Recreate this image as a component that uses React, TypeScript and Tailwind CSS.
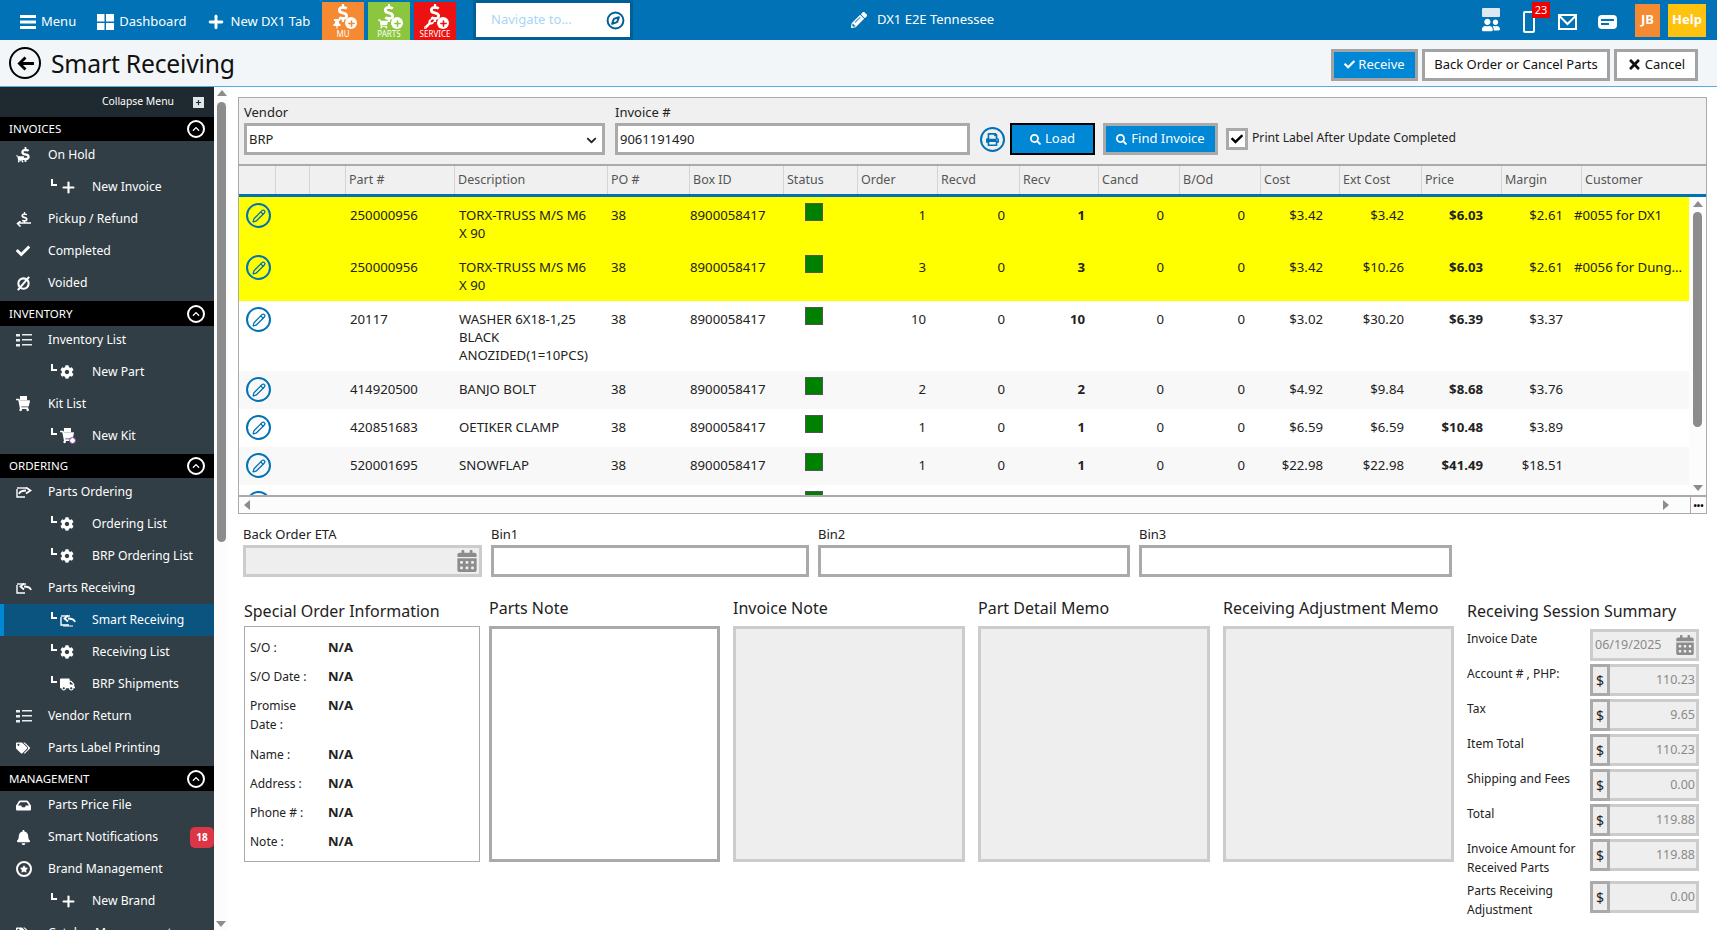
import { ReactNode } from 'react';
import { Compass, Pencil, Plus } from 'lucide-react';
import {
  FaBell, FaCalendarAlt, FaCheck, FaChevronDown, FaChevronUp, FaCog, FaDollarSign, FaInbox,
  FaPencilAlt, FaPrint, FaSearch, FaShoppingCart, FaStar, FaTags, FaTimes, FaTruck,
  FaUserFriends, FaWrench, FaThumbtack,
} from 'react-icons/fa';

const COLS =
  'grid grid-cols-[36px_34px_36px_109px_153px_82px_94px_74px_80px_82px_79px_81px_81px_79px_82px_80px_80px_minmax(0,1fr)]';

function Tile({ color, label, icon, accent }: { color: string; label: string; icon: ReactNode; accent: string }) {
  return (
    <div className={`w-[42px] h-[38px] mt-[2px] flex flex-col items-center text-white ${color}`}>
      <div className="relative h-[27px] w-[32px]">
        <FaDollarSign className="absolute left-[7px] top-[2px] text-[18px]" />
        <div className="absolute left-[5px] top-[17px] text-[10px]">{icon}</div>
        <div className="absolute right-[2px] top-[15px] w-[12px] h-[12px] rounded-full bg-white flex items-center justify-center">
          <Plus className={`w-[9px] h-[9px] ${accent}`} strokeWidth={4} />
        </div>
      </div>
      <span className="text-[8px] leading-[10px]">{label}</span>
    </div>
  );
}

function Calendar({ size = 'text-[22px]' }: { size?: string }) {
  return <FaCalendarAlt className={`${size} text-[#8c8c8c]`} />;
}

function ListIcon() {
  return (
    <svg viewBox="0 0 16 14" className="w-[16px] h-[14px]" fill="#e8edf0">
      <rect x="0" y="1" width="4" height="2.5" />
      <rect x="0" y="6" width="4" height="2.5" />
      <rect x="0" y="11" width="4" height="2.5" />
      <rect x="6" y="1" width="10" height="1.5" />
      <rect x="6" y="6" width="10" height="1.5" />
      <rect x="6" y="11" width="10" height="1.5" />
    </svg>
  );
}

function VoidIcon() {
  return (
    <svg viewBox="0 0 16 16" className="w-[15px] h-[15px]" fill="none" stroke="white" strokeWidth="2.2">
      <circle cx="8" cy="8" r="5.5" />
      <path d="M14 1 2 15" />
    </svg>
  );
}

function OnHoldIcon() {
  return (
    <div className="relative w-[17px] h-[16px] text-white">
      <FaDollarSign className="absolute right-0 top-0 text-[15px]" />
      <FaShoppingCart className="absolute left-0 bottom-0 text-[8px]" />
    </div>
  );
}

function PickupIcon() {
  return (
    <div className="relative w-[15px] h-[15px] text-white">
      <FaDollarSign className="absolute left-[3px] top-0 text-[11px]" />
      <svg viewBox="0 0 15 6" className="absolute left-0 bottom-0 w-[15px] h-[6px]" fill="none" stroke="white" strokeWidth="1.5">
        <path d="M15 2H2M4.5 0 1.5 2.5 4.5 5.5" />
      </svg>
    </div>
  );
}

function KitIcon({ plus }: { plus?: boolean }) {
  return (
    <div className="relative w-[16px] h-[16px] text-white">
      <FaShoppingCart className="absolute left-0 bottom-0 text-[14px]" />
      <div className="absolute left-[4px] top-0 w-[7px] h-[4px] bg-white" />
      {plus && <div className="absolute right-0 bottom-0 w-[7px] h-[7px] rounded-full bg-white border border-[#7b3fa0]" />}
    </div>
  );
}

function TransferIcon({ back, small }: { back?: boolean; small?: boolean }) {
  return (
    <svg viewBox="0 0 16 14" className="w-[16px] h-[14px]" fill="none" stroke="white">
      <path d="M1 4v8h8" strokeWidth="1.4" />
      <path d="M1 3h9" strokeWidth="1.4" />
      {back ? (
        <path d="M15 9C14 6 11 5.5 8 5.5M8 2.5 4.5 5.5 8 8.5" strokeWidth="1.8" />
      ) : (
        <path d="M3 9C4 6 7 5.5 10 5.5M10 2.5 14.5 5.5 10 8.5" strokeWidth="1.8" />
      )}
      {small && <path d="M3 13h10" strokeWidth="1" />}
    </svg>
  );
}

function BrandIcon() {
  return (
    <div className="w-[16px] h-[16px] rounded-full border-2 border-white flex items-center justify-center">
      <FaStar className="text-[8px] text-white" />
    </div>
  );
}

function WindowsIcon() {
  return (
    <svg viewBox="0 0 17 16" className="w-[17px] h-[16px]" fill="white">
      <rect x="0" y="0" width="7.5" height="7.5" />
      <rect x="9" y="0" width="8" height="7.5" />
      <rect x="0" y="9" width="7.5" height="7" />
      <rect x="9" y="9" width="8" height="7" />
    </svg>
  );
}

function Hamburger() {
  return (
    <svg viewBox="0 0 16 14" className="w-[16px] h-[14px]" fill="white">
      <rect width="16" height="3" y="0" />
      <rect width="16" height="3" y="5.5" />
      <rect width="16" height="3" y="11" />
    </svg>
  );
}

function TopLink({ icon, label }: { icon: ReactNode; label: string }) {
  return (
    <div className="flex items-center gap-[5px] text-[13px] text-white pt-[3px]">
      {icon}
      <span>{label}</span>
    </div>
  );
}

function TopBar() {
  return (
    <div className="h-10 shrink-0 bg-[#0072b5] flex items-stretch text-white">
      <div className="flex items-center gap-[21px] pl-5 w-[322px]">
        <TopLink icon={<Hamburger />} label="Menu" />
        <TopLink icon={<WindowsIcon />} label="Dashboard" />
        <div className="-ml-[2px]">
          <TopLink icon={<Plus className="w-[20px] h-[20px]" strokeWidth={3.5} />} label="New DX1 Tab" />
        </div>
      </div>
      <div className="flex gap-[4px]">
        <Tile color="bg-[#f58a32]" label="MU" icon={<FaThumbtack />} accent="text-[#f58a32]" />
        <Tile color="bg-[#8cc63f]" label="PARTS" icon={<FaShoppingCart />} accent="text-[#8cc63f]" />
        <Tile color="bg-[#ed1111]" label="SERVICE" icon={<FaWrench />} accent="text-[#ed1111]" />
      </div>
      <div className="ml-[17px] w-[160px] h-10 border-[3px] border-[#005f96] bg-white flex items-center pl-[15px] pr-[5px] justify-between">
        <span className="text-[13px] text-[#a9d6f5]">Navigate to...</span>
        <Compass className="w-[19px] h-[19px] text-[#005f96]" strokeWidth={2.5} />
      </div>
      <div className="ml-[218px] flex items-center gap-[10px] text-[13px]">
        <FaPencilAlt className="text-[16px]" />
        <span>DX1 E2E Tennessee</span>
      </div>
      <div className="flex-1" />
      <div className="flex items-center gap-[21px] pr-[11px]">
        <div className="flex flex-col items-center w-[19px] mr-[3px] mt-[2px]">
          <div className="w-[18px] h-[9px] bg-[#dce9f2] rounded-[1px]" />
          <FaUserFriends className="text-[18px] -mt-[1px]" />
        </div>
        <div className="relative mx-[2px] -ml-[1px] w-[12px] h-[22px] border-2 border-white rounded-[2px] mt-[4px]">
          <span className="absolute left-[7px] -top-[11px] w-[18px] h-[16px] bg-[#f00000] text-[11px] leading-[16px] text-center">
            23
          </span>
        </div>
        <svg viewBox="0 0 19 16" className="w-[19px] h-[16px] mt-[4px]" fill="none" stroke="white" strokeWidth="2">
          <rect x="1" y="1" width="17" height="14" />
          <path d="M1 1.5 9.5 10 18 1.5" />
        </svg>
        <div className="w-[19px] h-[14px] bg-white rounded-[4px] flex flex-col justify-center gap-[2px] px-[3px] mt-[4px]">
          <div className="h-[2px] w-full bg-[#0072b5]" />
          <div className="h-[2px] w-[8px] bg-[#0072b5]" />
        </div>
        <div className="flex gap-[8px] -ml-[3px]">
          <div className="w-[25px] h-[33px] bg-[#f58a32] flex items-center justify-center text-[13px] font-bold">JB</div>
          <div className="w-[38px] h-[33px] bg-[#ffc20e] flex items-center justify-center text-[13px] font-bold">Help</div>
        </div>
      </div>
    </div>
  );
}

function ActionButton({ children, primary, width }: { children: ReactNode; primary?: boolean; width: string }) {
  return (
    <button
      className={`${width} h-[32px] border-[3px] border-[#a3a3a3] flex items-center justify-center gap-[3px] text-[13px] ${
        primary ? 'bg-[#0087d6] text-white' : 'bg-white text-[#111]'
      }`}
    >
      {children}
    </button>
  );
}

function SubHeader() {
  return (
    <div className="h-[47px] shrink-0 bg-[#f2f6f9] border-b border-[#5aaae2] flex items-center pl-[9px] pr-[19px]">
      <div className="w-[32px] h-[32px] rounded-full border-[2.5px] border-black flex items-center justify-center">
        <svg viewBox="0 0 18 16" className="w-[17px] h-[15px]" fill="none" stroke="black" strokeWidth="3">
          <path d="M9 1.5 2.5 8 9 14.5M3 8h15" />
        </svg>
      </div>
      <h1 className="ml-[10px] mt-[2px] text-[24.7px] text-[#111] tracking-[-0.2px]">Smart Receiving</h1>
      <div className="flex-1" />
      <div className="flex gap-[4px] mt-[3px]">
        <ActionButton primary width="w-[87px]">
          <FaCheck className="text-[11px]" /> Receive
        </ActionButton>
        <ActionButton width="w-[188px]">Back Order or Cancel Parts</ActionButton>
        <ActionButton width="w-[84px]">
          <FaTimes className="text-[15px]" /> Cancel
        </ActionButton>
      </div>
    </div>
  );
}

type NavItem = { label: string; icon: ReactNode; child?: boolean; active?: boolean; badge?: string };

const gear = <FaCog className="text-[14px] text-white" />;

const NAV: { title: string; headerCls: string; items: NavItem[] }[] = [
  {
    title: 'INVOICES',
    headerCls: 'h-[24px]',
    items: [
      { label: 'On Hold', icon: <OnHoldIcon /> },
      { label: 'New Invoice', child: true, icon: <Plus className="w-[17px] h-[17px] text-white" strokeWidth={3} /> },
      { label: 'Pickup / Refund', icon: <PickupIcon /> },
      { label: 'Completed', icon: <FaCheck className="text-[14px] text-white" /> },
      { label: 'Voided', icon: <VoidIcon /> },
    ],
  },
  {
    title: 'INVENTORY',
    headerCls: 'h-[25px]',
    items: [
      { label: 'Inventory List', icon: <ListIcon /> },
      { label: 'New Part', child: true, icon: gear },
      { label: 'Kit List', icon: <KitIcon /> },
      { label: 'New Kit', child: true, icon: <KitIcon plus /> },
    ],
  },
  {
    title: 'ORDERING',
    headerCls: 'h-[24px]',
    items: [
      { label: 'Parts Ordering', icon: <TransferIcon /> },
      { label: 'Ordering List', child: true, icon: gear },
      { label: 'BRP Ordering List', child: true, icon: gear },
      { label: 'Parts Receiving', icon: <TransferIcon back /> },
      { label: 'Smart Receiving', child: true, active: true, icon: <TransferIcon back small /> },
      { label: 'Receiving List', child: true, icon: gear },
      { label: 'BRP Shipments', child: true, icon: <FaTruck className="text-[15px] text-white" /> },
      { label: 'Vendor Return', icon: <ListIcon /> },
      { label: 'Parts Label Printing', icon: <FaTags className="text-[14px] text-white" /> },
    ],
  },
  {
    title: 'MANAGEMENT',
    headerCls: 'h-[25px]',
    items: [
      { label: 'Parts Price File', icon: <FaInbox className="text-[15px] text-white" /> },
      { label: 'Smart Notifications', badge: '18', icon: <FaBell className="text-[15px] text-white" /> },
      { label: 'Brand Management', icon: <BrandIcon /> },
      { label: 'New Brand', child: true, icon: <Plus className="w-[17px] h-[17px] text-white" strokeWidth={3} /> },
      { label: 'Catalog Management', icon: <FaTags className="text-[14px] text-white" /> },
    ],
  },
];

function NavRow({ item }: { item: NavItem }) {
  return (
    <div
      className={`h-[32px] shrink-0 flex items-center text-[12.2px] text-white first:-mt-[2px] ${
        item.active ? 'bg-[#0b5480] border-l-4 border-[#0087d6] pl-[47px]' : item.child ? 'pl-[51px]' : 'pl-[16px]'
      }`}
    >
      {item.child && (
        <div className="w-[6px] h-[7px] border-l-2 border-b-2 border-white mb-[10px] mr-[3px] shrink-0" />
      )}
      <div className="w-[32px] flex items-center shrink-0">{item.icon}</div>
      <span className="whitespace-nowrap">{item.label}</span>
      {item.badge && (
        <span className="ml-auto w-[24px] h-[21px] rounded-[5px] bg-[#dc3545] text-[10px] font-bold flex items-center justify-center">
          {item.badge}
        </span>
      )}
    </div>
  );
}

function Sidebar() {
  return (
    <div className="w-[214px] shrink-0 bg-[#323e45] flex flex-col overflow-hidden">
      <div className="h-[30px] shrink-0 bg-[#1f2a30] flex items-center justify-end pr-[10px] gap-[19px] text-[10.4px] text-white">
        <span>Collapse Menu</span>
        <div className="w-[11px] h-[11px] bg-[#dfe6ea] flex items-center justify-center">
          <Plus className="w-[7px] h-[7px] text-[#1f2a30]" strokeWidth={4} />
        </div>
      </div>
      {NAV.map((section) => (
        <div key={section.title} className="flex flex-col shrink-0 pb-[2px] last:pb-0">
          <div className={`${section.headerCls} shrink-0 bg-black flex items-center justify-between pl-[9px] pr-[9px] text-[11.5px] text-white`}>
            <span>{section.title}</span>
            <div className="w-[18px] h-[18px] rounded-full border-2 border-white flex items-center justify-center">
              <FaChevronUp className="text-[8px]" />
            </div>
          </div>
          <div className="flex flex-col">
            {section.items.map((item) => (
              <NavRow key={item.label} item={item} />
            ))}
          </div>
        </div>
      ))}
    </div>
  );
}

function SideScroll() {
  return (
    <div className="w-[14px] shrink-0 bg-[#fcfcfc] flex flex-col items-center justify-between py-[3px]">
      <div className="flex flex-col items-center gap-[6px] ml-[1px]">
        <div className="w-0 h-0 border-x-[5px] border-x-transparent border-b-[6px] border-b-[#8c8c8c]" />
        <div className="w-[9px] h-[440px] rounded-full bg-[#8c8c8c]" />
      </div>
      <div className="w-0 h-0 border-x-[5px] border-x-transparent border-t-[6px] border-t-[#8c8c8c]" />
    </div>
  );
}

const HEADERS = ['', '', '', 'Part #', 'Description', 'PO #', 'Box ID', 'Status', 'Order', 'Recvd', 'Recv', 'Cancd', 'B/Od', 'Cost', 'Ext Cost', 'Price', 'Margin', 'Customer'];

type Row = {
  part: string; desc: string; order: string; recv: string; cost: string; ext: string; price: string; margin: string;
  customer?: string; bg: string; h: string;
};

const ROWS: Row[] = [
  { part: '250000956', desc: 'TORX-TRUSS M/S M6 X 90', order: '1', recv: '1', cost: '$3.42', ext: '$3.42', price: '$6.03', margin: '$2.61', customer: '#0055 for DX1', bg: 'bg-[#ffff00]', h: 'h-[52px]' },
  { part: '250000956', desc: 'TORX-TRUSS M/S M6 X 90', order: '3', recv: '3', cost: '$3.42', ext: '$10.26', price: '$6.03', margin: '$2.61', customer: '#0056 for Dung...', bg: 'bg-[#ffff00]', h: 'h-[52px]' },
  { part: '20117', desc: 'WASHER 6X18-1,25 BLACK ANOZIDED(1=10PCS)', order: '10', recv: '10', cost: '$3.02', ext: '$30.20', price: '$6.39', margin: '$3.37', bg: 'bg-white', h: 'h-[70px]' },
  { part: '414920500', desc: 'BANJO BOLT', order: '2', recv: '2', cost: '$4.92', ext: '$9.84', price: '$8.68', margin: '$3.76', bg: 'bg-[#f8f8f8]', h: 'h-[38px]' },
  { part: '420851683', desc: 'OETIKER CLAMP', order: '1', recv: '1', cost: '$6.59', ext: '$6.59', price: '$10.48', margin: '$3.89', bg: 'bg-white', h: 'h-[38px]' },
  { part: '520001695', desc: 'SNOWFLAP', order: '1', recv: '1', cost: '$22.98', ext: '$22.98', price: '$41.49', margin: '$18.51', bg: 'bg-[#f8f8f8]', h: 'h-[38px]' },
  { part: '', desc: '', order: '', recv: '', cost: '', ext: '', price: '', margin: '', bg: 'bg-white', h: 'h-[38px]' },
];

function EditIcon() {
  return (
    <div className="ml-[7px] mt-[6px] w-[25px] h-[25px] rounded-full border-2 border-[#0072b5] flex items-center justify-center">
      <Pencil className="w-[14px] h-[14px] text-[#0072b5]" strokeWidth={2.2} />
    </div>
  );
}

function TableRow({ row }: { row: Row }) {
  const num = 'text-right pt-[9px]';
  if (!row.part) {
    return (
      <div className={`${COLS} ${row.bg} ${row.h}`}>
        <div className="col-span-1"><EditIcon /></div>
        <div className="col-start-8 pl-[22px] pt-[6px]"><div className="w-[18px] h-[18px] bg-[#008000] border border-[#555]" /></div>
      </div>
    );
  }
  return (
    <div className={`${COLS} ${row.bg} ${row.h} text-[13.2px] leading-[18px] text-[#222]`}>
      <div><EditIcon /></div>
      <div />
      <div />
      <div className="pl-[5px] pt-[9px]">{row.part}</div>
      <div className="pl-[5px] pr-[10px] pt-[9px]">{row.desc}</div>
      <div className="pl-[4px] pt-[9px]">38</div>
      <div className="pl-[1px] pt-[9px]">8900058417</div>
      <div className="pl-[22px] pt-[6px]">
        <div className="w-[18px] h-[18px] bg-[#008000] border border-[#555]" />
      </div>
      <div className={`${num} pr-[11px]`}>{row.order}</div>
      <div className={`${num} pr-[14px]`}>0</div>
      <div className={`${num} pr-[13px] font-bold`}>{row.recv}</div>
      <div className={`${num} pr-[15px]`}>0</div>
      <div className={`${num} pr-[15px]`}>0</div>
      <div className={`${num} pr-[16px]`}>{row.cost}</div>
      <div className={`${num} pr-[17px]`}>{row.ext}</div>
      <div className={`${num} pr-[18px] font-bold`}>{row.price}</div>
      <div className={`${num} pr-[18px]`}>{row.margin}</div>
      <div className="-ml-[7px] pt-[9px] whitespace-nowrap">{row.customer}</div>
    </div>
  );
}

function PartsTable() {
  return (
    <div className="border border-[#aaa] h-[417px] flex flex-col shrink-0">
      <div className="h-[66px] shrink-0 bg-[#f0f0f0] flex pl-[5px] text-[13px] text-[#222]">
        <div className="w-[361px] pt-[4px]">
          <div className="leading-[20px] pb-[1px]">Vendor</div>
          <div className="h-[32px] border-[3px] border-[#aaa] bg-white flex items-center justify-between pl-[2px] pr-[5px] pt-[2px]">
            <span>BRP</span>
            <FaChevronDown className="text-[11px]" />
          </div>
        </div>
        <div className="w-[355px] ml-[10px] pt-[4px]">
          <div className="leading-[20px] pb-[1px]">Invoice #</div>
          <div className="h-[32px] border-[3px] border-[#aaa] bg-white flex items-center pl-[2px] pt-[2px]">9061191490</div>
        </div>
        <div className="flex items-center ml-[10px] mt-[25px] h-[32px]">
          <div className="w-[25px] h-[25px] rounded-full border-2 border-[#0072b5] flex items-center justify-center">
            <FaPrint className="text-[13px] text-[#0072b5]" />
          </div>
          <button className="ml-[5px] w-[85px] h-[32px] bg-[#0087d6] border-2 border-black text-white flex items-center justify-center gap-[4px]">
            <FaSearch className="text-[11px]" /> Load
          </button>
          <button className="ml-[8px] w-[115px] h-[32px] bg-[#0087d6] border-[3px] border-[#aaa] text-white flex items-center justify-center gap-[4px]">
            <FaSearch className="text-[11px]" /> Find Invoice
          </button>
          <div className="ml-[8px] w-[22px] h-[22px] border-[3px] border-[#aaa] bg-white flex items-center justify-center">
            <FaCheck className="text-[12px] text-black" />
          </div>
          <span className="ml-[4px] text-[12.2px] -mt-[2px]">Print Label After Update Completed</span>
        </div>
      </div>
      <div className={`${COLS} h-[33px] shrink-0 bg-[#f0f0f0] border-t-2 border-t-[#aaa] border-b-[3px] border-b-[#0072b5] text-[12.5px] text-[#555] pr-[17px]`}>
        {HEADERS.map((h, i) => (
          <div key={i} className={`pl-[3px] flex items-center ${i > 0 ? 'border-l border-[#d4d4d4]' : ''}`}>
            {h}
          </div>
        ))}
      </div>
      <div className="flex flex-1 min-h-0">
        <div className="flex-1 min-w-0 overflow-hidden">
          {ROWS.map((row, i) => (
            <TableRow key={i} row={row} />
          ))}
        </div>
        <div className="w-[17px] shrink-0 bg-[#fcfcfc] flex flex-col items-center justify-between py-[4px]">
          <div className="flex flex-col items-center gap-[5px]">
            <div className="w-0 h-0 border-x-[5px] border-x-transparent border-b-[6px] border-b-[#8c8c8c]" />
            <div className="w-[9px] h-[215px] rounded-full bg-[#8c8c8c]" />
          </div>
          <div className="w-0 h-0 border-x-[5px] border-x-transparent border-t-[6px] border-t-[#8c8c8c]" />
        </div>
      </div>
      <div className="h-[18px] shrink-0 border-t-2 border-[#aaa] bg-[#fcfcfc] flex items-center pl-[5px]">
        <div className="w-0 h-0 border-y-[5px] border-y-transparent border-r-[6px] border-r-[#8c8c8c]" />
        <div className="flex-1" />
        <div className="w-0 h-0 border-y-[5px] border-y-transparent border-l-[6px] border-l-[#8c8c8c] mr-[21px]" />
        <div className="w-[16px] h-full border-l border-[#aaa] flex items-center justify-center text-[9px] font-bold leading-none">
          •••
        </div>
      </div>
    </div>
  );
}

function BinField({ label, width, ml }: { label: string; width: string; ml: string }) {
  return (
    <div className={`${width} ${ml}`}>
      <div className="text-[13px] leading-[20px] pb-[1px] text-[#222]">{label}</div>
      <div className="h-[32px] border-[3px] border-[#aaa] bg-white" />
    </div>
  );
}

function BinRow() {
  return (
    <div className="flex mt-[10px] pl-[5px] shrink-0">
      <div className="w-[239px]">
        <div className="text-[13px] leading-[20px] pb-[1px] text-[#222]">Back Order ETA</div>
        <div className="h-[32px] border-[3px] border-[#ccc] bg-[#eee] flex items-center justify-end pr-[1px]">
          <Calendar />
        </div>
      </div>
      <BinField label="Bin1" width="w-[318px]" ml="ml-[9px]" />
      <BinField label="Bin2" width="w-[312px]" ml="ml-[9px]" />
      <BinField label="Bin3" width="w-[313px]" ml="ml-[9px]" />
    </div>
  );
}

const SPECIAL = [
  { label: 'S/O :', cls: 'h-[29px]' },
  { label: 'S/O Date :', cls: 'h-[29px]' },
  { label: 'Promise Date :', cls: 'h-[49px]' },
  { label: 'Name :', cls: 'h-[29px]' },
  { label: 'Address :', cls: 'h-[29px]' },
  { label: 'Phone # :', cls: 'h-[29px]' },
  { label: 'Note :', cls: 'h-[29px]' },
];

function NoteBox({ title, width, disabled }: { title: string; width: string; disabled?: boolean }) {
  return (
    <div className={`${width} shrink-0 flex flex-col`}>
      <div className="h-[49px] flex items-end pb-[6px] text-[16px] text-[#222]">{title}</div>
      <div className={`h-[236px] border-[3px] ${disabled ? 'border-[#ccc] bg-[#eee]' : 'border-[#aaa] bg-white'}`} />
    </div>
  );
}

const SUMMARY = [
  { label: 'Account # , PHP:', value: '110.23', cls: 'h-[35px]' },
  { label: 'Tax', value: '9.65', cls: 'h-[35px]' },
  { label: 'Item Total', value: '110.23', cls: 'h-[35px]' },
  { label: 'Shipping and Fees', value: '0.00', cls: 'h-[35px]' },
  { label: 'Total', value: '119.88', cls: 'h-[35px]' },
  { label: 'Invoice Amount for Received Parts', value: '119.88', cls: 'h-[42px]' },
  { label: 'Parts Receiving Adjustment', value: '0.00', cls: 'h-[42px]' },
];

function Summary() {
  return (
    <div className="w-[232px] ml-[13px] shrink-0">
      <div className="h-[49px] flex items-end pb-[3px] text-[16px] text-[#222]">Receiving Session Summary</div>
      <div className="h-[35px] mt-[3px] flex text-[12px] text-[#222]">
        <div className="w-[123px] leading-[19px]">Invoice Date</div>
        <div className="w-[109px] h-[32px] border-[3px] border-[#ccc] bg-[#eee] flex items-center justify-between pl-[2px] pr-[1px] text-[12.5px] text-[#8a8a8a]">
          <span>06/19/2025</span>
          <Calendar size="text-[20px]" />
        </div>
      </div>
      {SUMMARY.map((s) => (
        <div key={s.label} className={`${s.cls} flex text-[12px] text-[#222]`}>
          <div className="w-[123px] pr-[5px] leading-[19px]">{s.label}</div>
          <div className="w-[109px] h-[32px] border-[3px] border-[#ccc] bg-[#eee] flex items-center text-[12.5px]">
            <div className="h-[32px] w-[20px] shrink-0 border-[3px] border-[#aaa] -ml-[3px] bg-[#eee] flex items-center justify-center text-[#222] text-[14px]">
              $
            </div>
            <div className="flex-1 text-right pr-[1px] text-[#8a8a8a]">{s.value}</div>
          </div>
        </div>
      ))}
    </div>
  );
}

function BottomRow() {
  return (
    <div className="flex pl-[6px] shrink-0">
      <div className="w-[236px] shrink-0">
        <div className="h-[49px] flex items-end pb-[3px] text-[16px] text-[#222]">Special Order Information</div>
        <div className="h-[236px] border border-[#aaa] pt-[8px] pl-[5px]">
          {SPECIAL.map((s) => (
            <div key={s.label} className={`${s.cls} flex text-[12px] leading-[19px] text-[#222] pt-[3px]`}>
              <div className="w-[78px] pr-[14px]">{s.label}</div>
              <div className="font-bold text-[13px]">N/A</div>
            </div>
          ))}
        </div>
      </div>
      <div className="ml-[9px] flex gap-[13px]">
        <NoteBox title="Parts Note" width="w-[231px]" />
        <NoteBox title="Invoice Note" width="w-[232px]" disabled />
        <NoteBox title="Part Detail Memo" width="w-[232px]" disabled />
        <NoteBox title="Receiving Adjustment Memo" width="w-[231px]" disabled />
      </div>
      <Summary />
    </div>
  );
}

export default function App() {
  return (
    <div className="h-screen w-full overflow-hidden flex flex-col bg-white font-['Noto_Sans','Open_Sans',sans-serif]">
      <TopBar />
      <SubHeader />
      <div className="flex flex-1 min-h-0">
        <Sidebar />
        <SideScroll />
        <div className="flex-1 min-w-0 flex flex-col pt-[10px] pl-[10px] pr-[10px] overflow-hidden">
          <PartsTable />
          <BinRow />
          <BottomRow />
        </div>
      </div>
    </div>
  );
}
